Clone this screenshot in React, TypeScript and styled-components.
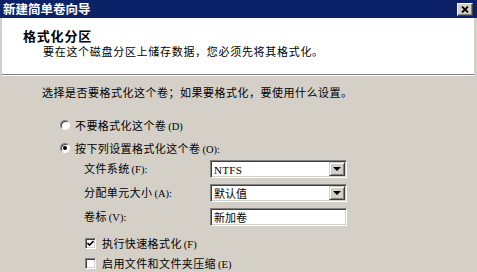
import React from "react";
import styled, { createGlobalStyle } from "styled-components";

const Global = createGlobalStyle`
  html, body { margin: 0; padding: 0; background: #d4d0c8; }
  body { width: 477px; height: 272px; overflow: hidden; }
  * { box-sizing: border-box; }
`;

const CJK = `"Noto Sans CJK SC", "Noto Sans", sans-serif`;

const Window = styled.div`
  width: 477px;
  height: 272px;
  display: flex;
  flex-direction: column;
  font-family: ${CJK};
  color: #000;
  overflow: hidden;
`;

const TitleBar = styled.div`
  height: 18px;
  flex: none;
  background: #0c2268;
  display: flex;
  align-items: center;
  justify-content: space-between;
  padding: 0 4px 0 3px;
`;

const Title = styled.span`
  color: #fff;
  font-weight: 700;
  font-size: 12.5px;
  line-height: 18px;
`;

const CloseButton = styled.div`
  width: 16px;
  height: 13px;
  background: #d4d0c8;
  border: 1px solid;
  border-color: #fff #404040 #404040 #fff;
  box-shadow: inset -1px -1px #808080;
  display: flex;
  align-items: center;
  justify-content: center;
  margin-top: 1px;
`;

const Frame = styled.div`
  flex: 1;
  display: flex;
  flex-direction: column;
  border-left: 2px solid #d4d0c8;
  border-right: 3px solid #d4d0c8;
  box-shadow: inset -1px 0 #b8b4ac;
`;

const Header = styled.div`
  height: 56px;
  flex: none;
  background: #fff;
  padding: 9px 0 0 21px;
  display: flex;
  flex-direction: column;
`;

const HeaderTitle = styled.div`
  font-weight: 700;
  font-size: 13px;
  letter-spacing: 0.8px;
  line-height: 17px;
`;

const HeaderSub = styled.div`
  font-size: 11px;
  letter-spacing: 0.7px;
  line-height: 15px;
  padding-left: 20px;
`;

const Separator = styled.div`
  height: 2px;
  flex: none;
  border-top: 1px solid #808080;
  border-bottom: 1px solid #fff;
`;

const Body = styled.div`
  flex: 1;
  background: #d4d0c8;
  padding: 9px 0 0 40px;
  display: flex;
  flex-direction: column;
`;

const Intro = styled.div`
  font-size: 11px;
  letter-spacing: 0.5px;
  line-height: 14px;
`;

const OptionList = styled.div`
  margin-top: 17px;
  padding-left: 18px;
  display: flex;
  flex-direction: column;
  gap: 5px;
`;

const OptionRow = styled.label`
  height: 18px;
  display: flex;
  align-items: center;
  gap: 5px;
  font-size: 11px;
  letter-spacing: 0.4px;
`;

const Key = styled.span`
  font-family: "Liberation Serif", serif;
  font-size: 10.5px;
  letter-spacing: 0;
  margin-left: 2px;
`;

const Radio = styled.span<{ $checked?: boolean }>`
  width: 10px;
  height: 10px;
  border-radius: 50%;
  background: #fff;
  border: 1px solid;
  border-color: #808080 #fff #fff #808080;
  box-shadow: inset 1px 1px #404040;
  display: flex;
  align-items: center;
  justify-content: center;
  &::after {
    content: "";
    width: 4px;
    height: 4px;
    border-radius: 50%;
    background: ${(p) => (p.$checked ? "#000" : "transparent")};
  }
`;

const FormGrid = styled.div`
  margin-top: 3px;
  padding-left: 42px;
  display: grid;
  grid-template-columns: 126px 137px;
  grid-auto-rows: 18px;
  row-gap: 6px;
  align-items: center;
`;

const FieldLabel = styled.span`
  font-size: 11px;
  letter-spacing: 0.4px;
  line-height: 18px;
`;

const Field = styled.div`
  height: 18px;
  background: #fff;
  border: 1px solid;
  border-color: #808080 #fff #fff #808080;
  box-shadow: inset 1px 1px #404040, inset -1px -1px #d4d0c8;
  display: flex;
  align-items: center;
  padding-left: 3px;
  font-size: 11px;
`;

const Latin = styled.span`
  font-family: "Liberation Serif", serif;
  font-size: 11px;
  letter-spacing: 0.3px;
`;

const FieldText = styled.span`
  flex: 1;
  line-height: 16px;
`;

const DropButton = styled.span`
  width: 16px;
  height: 14px;
  margin-right: 1px;
  background: #d4d0c8;
  border: 1px solid;
  border-color: #d4d0c8 #404040 #404040 #d4d0c8;
  box-shadow: inset 1px 1px #fff, inset -1px -1px #808080;
  display: flex;
  align-items: center;
  justify-content: center;
  &::after {
    content: "";
    border-left: 4px solid transparent;
    border-right: 4px solid transparent;
    border-top: 4px solid #000;
  }
`;

const CheckList = styled.div`
  margin-top: 8px;
  padding-left: 43px;
  display: flex;
  flex-direction: column;
  gap: 2px;
`;

const CheckRow = styled.label`
  height: 18px;
  display: flex;
  align-items: center;
  gap: 6px;
  font-size: 11px;
  letter-spacing: 0.4px;
`;

const CheckBox = styled.span`
  width: 11px;
  height: 11px;
  background: #fff;
  border: 1px solid;
  border-color: #808080 #fff #fff #808080;
  box-shadow: inset 1px 1px #404040, inset -1px -1px #d4d0c8;
  display: flex;
  align-items: center;
  justify-content: center;
`;

const Check = () => (
  <svg width="7" height="7" viewBox="0 0 7 7">
    <path d="M0.5 3 L2.5 5 L6.5 1" stroke="#000" strokeWidth="1.6" fill="none" />
  </svg>
);

export default function App() {
  return (
    <>
      <Global />
      <Window>
        <TitleBar>
          <Title>新建简单卷向导</Title>
          <CloseButton>
            <svg width="8" height="7" viewBox="0 0 8 7">
              <path d="M1 0.5 L7 6.5 M7 0.5 L1 6.5" stroke="#000" strokeWidth="1.8" />
            </svg>
          </CloseButton>
        </TitleBar>
        <Frame>
          <Header>
            <HeaderTitle>格式化分区</HeaderTitle>
            <HeaderSub>要在这个磁盘分区上储存数据，您必须先将其格式化。</HeaderSub>
          </Header>
          <Separator />
          <Body>
            <Intro>选择是否要格式化这个卷；如果要格式化，要使用什么设置。</Intro>
            <OptionList>
              <OptionRow>
                <Radio />
                <span>
                  不要格式化这个卷<Key>(D)</Key>
                </span>
              </OptionRow>
              <OptionRow>
                <Radio $checked />
                <span>
                  按下列设置格式化这个卷<Key>(O):</Key>
                </span>
              </OptionRow>
            </OptionList>
            <FormGrid>
              <FieldLabel>
                文件系统<Key>(F):</Key>
              </FieldLabel>
              <Field>
                <FieldText>
                  <Latin>NTFS</Latin>
                </FieldText>
                <DropButton />
              </Field>
              <FieldLabel>
                分配单元大小<Key>(A):</Key>
              </FieldLabel>
              <Field>
                <FieldText>默认值</FieldText>
                <DropButton />
              </Field>
              <FieldLabel>
                卷标<Key>(V):</Key>
              </FieldLabel>
              <Field>
                <FieldText>新加卷</FieldText>
              </Field>
            </FormGrid>
            <CheckList>
              <CheckRow>
                <CheckBox>
                  <Check />
                </CheckBox>
                <span>
                  执行快速格式化<Key>(F)</Key>
                </span>
              </CheckRow>
              <CheckRow>
                <CheckBox />
                <span>
                  启用文件和文件夹压缩<Key>(E)</Key>
                </span>
              </CheckRow>
            </CheckList>
          </Body>
        </Frame>
      </Window>
    </>
  );
}
